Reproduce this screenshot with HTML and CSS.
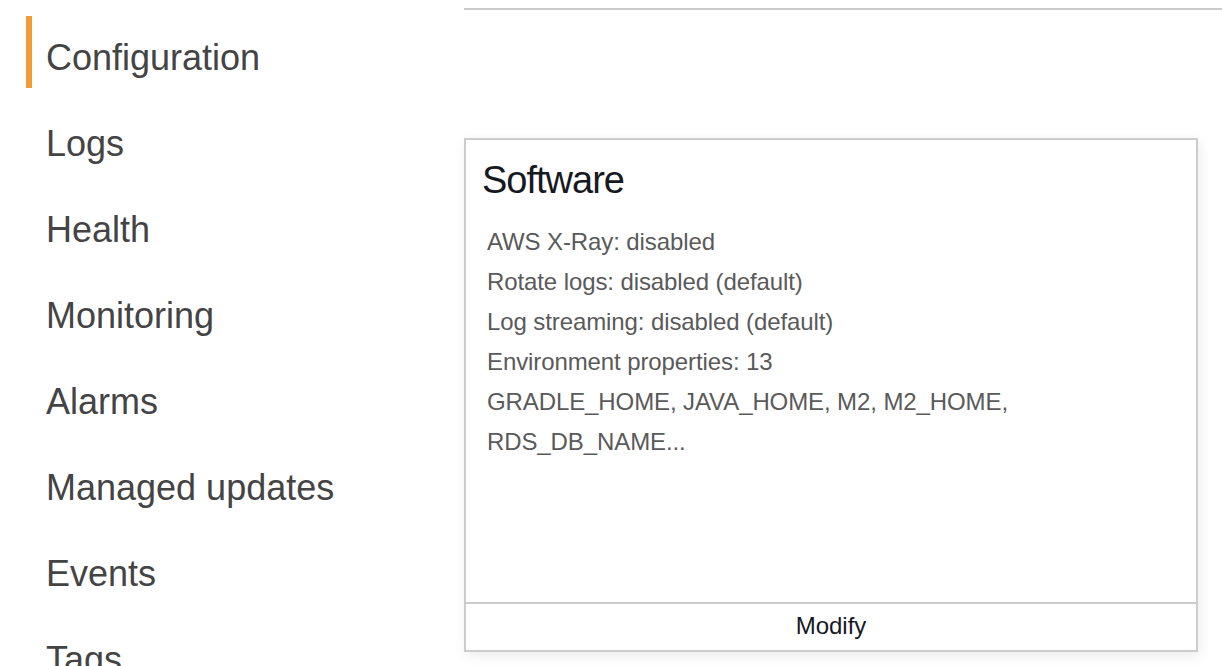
FILE: index.html
```html
<!DOCTYPE html>
<html>
<head>
<meta charset="utf-8">
<link rel="stylesheet" href="styles.css">
</head>
<body>
<div class="page">
  <nav class="sidenav">
    <a class="nav-item active">Configuration</a>
    <a class="nav-item">Logs</a>
    <a class="nav-item">Health</a>
    <a class="nav-item">Monitoring</a>
    <a class="nav-item">Alarms</a>
    <a class="nav-item">Managed updates</a>
    <a class="nav-item">Events</a>
    <a class="nav-item">Tags</a>
  </nav>
  <main class="main">
    <div class="topbar"></div>
    <section class="card">
      <h2 class="card-title">Software</h2>
      <div class="card-body">
        <div class="line">AWS X-Ray: disabled</div>
        <div class="line">Rotate logs: disabled (default)</div>
        <div class="line">Log streaming: disabled (default)</div>
        <div class="line">Environment properties: 13</div>
        <div class="line">GRADLE_HOME, JAVA_HOME, M2, M2_HOME,</div>
        <div class="line">RDS_DB_NAME...</div>
      </div>
      <div class="card-footer">Modify</div>
    </section>
  </main>
</div>
</body>
</html>
```
FILE: styles.css
```css
html, body {
  margin: 0;
  padding: 0;
  background: #ffffff;
  overflow: hidden;
}
body {
  font-family: "Liberation Sans", Arial, Helvetica, sans-serif;
}
.page {
  display: flex;
  width: 1222px;
  height: 666px;
  overflow: hidden;
}
.sidenav {
  width: 438px;
  flex: none;
  padding: 16px 0 0 26px;
  display: flex;
  flex-direction: column;
  gap: 14px;
}
.nav-item {
  display: block;
  height: 72px;
  box-sizing: border-box;
  border-left: 6px solid transparent;
  padding: 20px 0 8px 14px;
  font-size: 36px;
  line-height: 44px;
  color: #444444;
  white-space: nowrap;
}
.nav-item.active {
  border-left-color: #f39c37;
}
.main {
  flex: 1;
  display: flex;
  flex-direction: column;
}
.topbar {
  height: 8px;
  border-bottom: 2px solid #cccccc;
  margin-right: -20px;
}
.card {
  margin-top: 128px;
  width: 734px;
  height: 514px;
  box-sizing: border-box;
  border: 2px solid #cccccc;
  box-shadow: 2px 4px 12px rgba(0, 0, 0, 0.08);
  display: flex;
  flex-direction: column;
  background: #fff;
}
.card-title {
  margin: 0;
  padding: 18px 0 0 16px;
  font-size: 38px;
  letter-spacing: -1px;
  line-height: 44px;
  font-weight: normal;
  color: #16191f;
}
.card-body {
  flex: 1;
  padding: 20px 0 0 21px;
  font-size: 24px;
  letter-spacing: -0.1px;
  line-height: 40px;
  color: #5a5a5a;
}
.card-footer {
  border-top: 2px solid #cccccc;
  height: 46px;
  line-height: 44px;
  text-align: center;
  font-size: 24px;
  color: #16191f;
}
```
